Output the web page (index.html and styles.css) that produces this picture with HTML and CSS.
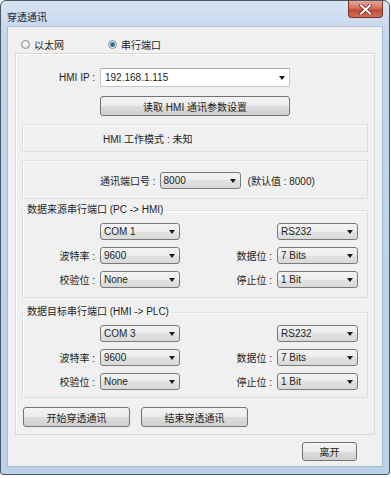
FILE: index.html
```html
<!DOCTYPE html>
<html lang="zh">
  <head>
    <meta charset="UTF-8">
    <title>穿透通讯</title>
    <link rel="stylesheet" href="styles.css">
  </head>
  <body>
    <div class="window">
      <div class="titlebar">
        <span class="title">穿透通讯</span>
        <span class="close">
          <svg width="13" height="11" viewBox="0 0 13 11">
            <path d="M2 1.5 L11 9.5 M11 1.5 L2 9.5" stroke="#7a2a20" stroke-width="3.6" stroke-linecap="square"/>
            <path d="M2 1.5 L11 9.5 M11 1.5 L2 9.5" stroke="#ffffff" stroke-width="2" stroke-linecap="square"/>
          </svg>
        </span>
      </div>
      <div class="client">
        <div class="radios">
          <label class="radio"><span class="dot"></span>以太网</label>
          <label class="radio checked"><span class="dot"></span>串行端口</label>
        </div>

        <div class="panel">
          <div class="ip-row">
            <span class="label">HMI IP :</span>
            <div class="combo edit"><span>192.168.1.115</span><i class="arrow"></i></div>
          </div>
          <div class="btn read">读取 HMI 通讯参数设置</div>

          <div class="box mode">HMI 工作模式 : 未知</div>

          <div class="box port">
            <span>通讯端口号 :</span>
            <div class="combo port-combo"><span>8000</span><i class="arrow"></i></div>
            <span class="hint">(默认值 : 8000)</span>
          </div>

          <fieldset class="group">
            <legend>数据来源串行端口 (PC -&gt; HMI)</legend>
            <div class="grid">
              <span class="label"></span>
              <div class="combo"><span>COM 1</span><i class="arrow"></i></div>
              <span class="label"></span>
              <div class="combo"><span>RS232</span><i class="arrow"></i></div>
              <span class="label">波特率 :</span>
              <div class="combo"><span>9600</span><i class="arrow"></i></div>
              <span class="label">数据位 :</span>
              <div class="combo"><span>7 Bits</span><i class="arrow"></i></div>
              <span class="label">校验位 :</span>
              <div class="combo"><span>None</span><i class="arrow"></i></div>
              <span class="label">停止位 :</span>
              <div class="combo"><span>1 Bit</span><i class="arrow"></i></div>
            </div>
          </fieldset>

          <fieldset class="group target">
            <legend>数据目标串行端口 (HMI -&gt; PLC)</legend>
            <div class="grid">
              <span class="label"></span>
              <div class="combo"><span>COM 3</span><i class="arrow"></i></div>
              <span class="label"></span>
              <div class="combo"><span>RS232</span><i class="arrow"></i></div>
              <span class="label">波特率 :</span>
              <div class="combo"><span>9600</span><i class="arrow"></i></div>
              <span class="label">数据位 :</span>
              <div class="combo"><span>7 Bits</span><i class="arrow"></i></div>
              <span class="label">校验位 :</span>
              <div class="combo"><span>None</span><i class="arrow"></i></div>
              <span class="label">停止位 :</span>
              <div class="combo"><span>1 Bit</span><i class="arrow"></i></div>
            </div>
          </fieldset>

          <div class="actions">
            <div class="btn">开始穿透通讯</div>
            <div class="btn">结束穿透通讯</div>
          </div>
        </div>

        <div class="footer">
          <div class="btn leave">离开</div>
        </div>
      </div>
    </div>
  </body>
</html>
```

FILE: styles.css
```css
body {
  margin: 0;
  background-color: #ffffff;
  font-family: "Liberation Sans", "Noto Sans CJK SC", sans-serif;
  font-size: 10px;
  color: #1e1e1e;
}

.window {
  width: 390px;
  height: 475px;
  box-sizing: border-box;
  border: 1px solid #4b5866;
  border-radius: 6px 6px 3px 3px;
  background: linear-gradient(#d6e3f2, #c2d5eb 40px, #bcd0e8);
}

.titlebar {
  height: 25px;
  display: flex;
  justify-content: space-between;
  align-items: flex-start;
}

.title {
  padding: 8px 0 0 6px;
  font-size: 10px;
  color: #1a2430;
}

.close {
  width: 35px;
  height: 17px;
  margin-right: 6px;
  box-sizing: border-box;
  border: 1px solid #7a3326;
  border-top: none;
  border-radius: 0 0 4px 4px;
  background: linear-gradient(#e8a597, #d5705d 45%, #c24a34 55%, #d0705a);
  display: flex;
  align-items: center;
  justify-content: center;
}

.client {
  margin: 0 6px;
  height: 441px;
  box-sizing: border-box;
  background-color: #f0f0f0;
  border: 1px solid #a9bbd1;
  border-top-color: #b4c6dc;
}

/* radio buttons */
.radios {
  height: 26px;
  box-sizing: border-box;
  padding: 8px 0 0 13px;
  display: flex;
  align-items: center;
}

.radio {
  display: flex;
  align-items: center;
  gap: 4px;
}

.radio:first-child {
  width: 87px;
}

.dot {
  width: 9px;
  height: 9px;
  box-sizing: border-box;
  border-radius: 50%;
  border: 1px solid #8d8d8d;
  background: radial-gradient(circle at 40% 35%, #ffffff, #d8d8d8);
}

.checked .dot {
  background: radial-gradient(circle, #1f5a85 0, #3d7fae 2px, #e8eef3 3px, #d6d6d6);
}

/* main panel */
.panel {
  margin: 0 7px;
  border: 1px solid #d8d8d8;
  box-shadow: inset 1px 1px 0 #ffffff;
  padding: 0 6px 7px;
}

.label {
  text-align: right;
  padding-right: 5px;
}

.ip-row {
  margin-top: 14px;
  display: grid;
  grid-template-columns: 78px 190px;
  align-items: center;
}

.combo {
  height: 17px;
  box-sizing: border-box;
  border: 1px solid #7a7a7a;
  border-radius: 3px;
  background: linear-gradient(#f4f4f4, #ececec 50%, #e2e2e2 50%, #d9d9d9);
  padding: 0 4px 0 3px;
  display: flex;
  align-items: center;
  justify-content: space-between;
}

.combo.edit {
  height: 19px;
  border: 1px solid #c5c8cc;
  border-top-color: #abadb3;
  border-radius: 0;
  background: #ffffff;
  padding: 0 4px 0 4px;
}

.arrow {
  width: 0;
  height: 0;
  border-left: 3px solid transparent;
  border-right: 3px solid transparent;
  border-top: 4px solid #1a1a1a;
}

.btn {
  height: 20px;
  box-sizing: border-box;
  border: 1px solid #737373;
  border-radius: 3px;
  background: linear-gradient(#f3f3f3, #ebebeb 50%, #dddddd 50%, #d0d0d0);
  display: flex;
  align-items: center;
  justify-content: center;
}

.read {
  margin: 9px 0 0 78px;
  width: 190px;
}

.box {
  margin-top: 8px;
  border: 1px solid #dddddd;
  box-shadow: inset 1px 1px 0 #ffffff;
  display: flex;
  align-items: center;
}

.mode {
  height: 28px;
  box-sizing: border-box;
  padding-left: 80px;
}

.port {
  height: 39px;
  box-sizing: border-box;
  padding: 2px 0 0 77px;
}

.port-combo {
  width: 81px;
  margin-left: 4px;
}

.hint {
  margin-left: 7px;
}

/* serial port groups */
.group {
  margin: 5px 0 0;
  padding: 0 0 9px;
  border: 1px solid #dddddd;
  box-shadow: inset 1px 1px 0 #ffffff;
  min-inline-size: 0;
}

.group.target {
  margin-top: 8px;
  padding-bottom: 7px;
}

.group legend {
  margin-left: 2px;
  padding: 0 2px;
  line-height: 12px;
}

.grid {
  margin-top: 7px;
  display: grid;
  grid-template-columns: 77px 80px 97px 81px;
  row-gap: 7px;
  align-items: center;
}

.actions {
  margin: 9px 0 0 1px;
  display: flex;
  gap: 11px;
}

.actions .btn {
  width: 107px;
}

.footer {
  display: flex;
  justify-content: flex-end;
  padding: 7px 25px 0 0;
}

.leave {
  width: 55px;
  height: 19px;
}
```
